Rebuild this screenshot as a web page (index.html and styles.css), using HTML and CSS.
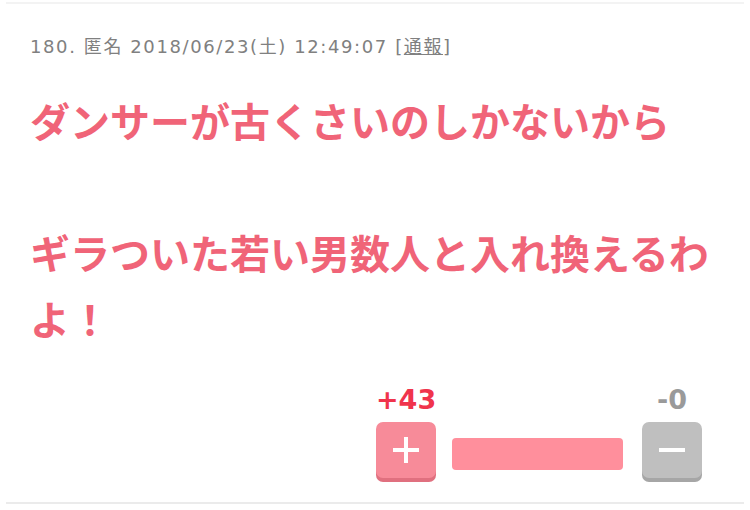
FILE: index.html
```html
<!DOCTYPE html>
<html lang="ja">
<head>
  <meta charset="UTF-8">
  <meta name="viewport" content="width=device-width, initial-scale=1">
  <title>180. 匿名</title>
  <link rel="stylesheet" href="styles.css">
</head>
<body>
  <div class="res">
    <div class="res-head">180. 匿名 2018/06/23(土) 12:49:07 [<a href="#" class="report">通報</a>]</div>
    <div class="res-body">ダンサーが古くさいのしかないから<br><br>ギラついた若い男数人と入れ換えるわよ！</div>
    <div class="vote">
      <div class="count plus-count">+43</div>
      <div></div>
      <div class="count minus-count">-0</div>
      <button class="vote-btn plus-btn" aria-label="プラス">
        <svg width="28" height="28" viewBox="0 0 28 28"><path d="M14 1v26M1 14h26" stroke="#fff" stroke-width="4"/></svg>
      </button>
      <div class="bar"><div class="bar-plus" style="width: 100%"></div></div>
      <button class="vote-btn minus-btn" aria-label="マイナス">
        <svg width="28" height="28" viewBox="0 0 28 28"><path d="M1 14h26" stroke="#fff" stroke-width="4"/></svg>
      </button>
    </div>
  </div>
</body>
</html>
```

FILE: styles.css
```css
* { box-sizing: border-box; }
body {
  margin: 0;
  background: #fff;
  font-family: "DejaVu Sans", "Noto Sans CJK JP", sans-serif;
}
.res {
  margin: 2px 6px 0;
  padding: 31px 24px 20px;
  border-top: 2px solid #f3f3f3;
  border-bottom: 2px solid #ebebeb;
}
.res-head {
  font-size: 18px;
  line-height: 24px;
  letter-spacing: 1.6px;
  color: #808080;
}
.report {
  color: #808080;
  text-decoration: underline;
}
.res-body {
  margin-top: 28px;
  font-family: "Noto Sans CJK JP", sans-serif;
  font-weight: 700;
  font-size: 40px;
  line-height: 66px;
  color: #f06478;
}
.vote {
  margin-top: 33px;
  margin-right: 18px;
  display: grid;
  grid-template-columns: 60px 171px 63px;
  column-gap: 16px;
  row-gap: 6px;
  justify-content: end;
  align-items: center;
}
.count {
  width: 60px;
  font-family: "DejaVu Sans", sans-serif;
  font-weight: 700;
  font-size: 27px;
  line-height: 32px;
  text-align: center;
}
.plus-count { color: #f0344c; }
.minus-count {
  justify-self: end;
  color: #9a9a9a;
}
.vote-btn {
  width: 60px;
  height: 56px;
  margin-bottom: 4px;
  padding: 0;
  border: none;
  border-radius: 7px;
  display: flex;
  align-items: center;
  justify-content: center;
  cursor: pointer;
}
.plus-btn {
  background: #f78b99;
  box-shadow: 0 4px 0 #e0707f;
}
.minus-btn {
  justify-self: end;
  background: #bfbfbf;
  box-shadow: 0 4px 0 #a6a6a6;
}
.bar {
  height: 32px;
  margin-top: 4px;
  border-radius: 4px;
  overflow: hidden;
  background: #cfcfcf;
}
.bar-plus {
  height: 100%;
  background: #ff8f9c;
}
```
